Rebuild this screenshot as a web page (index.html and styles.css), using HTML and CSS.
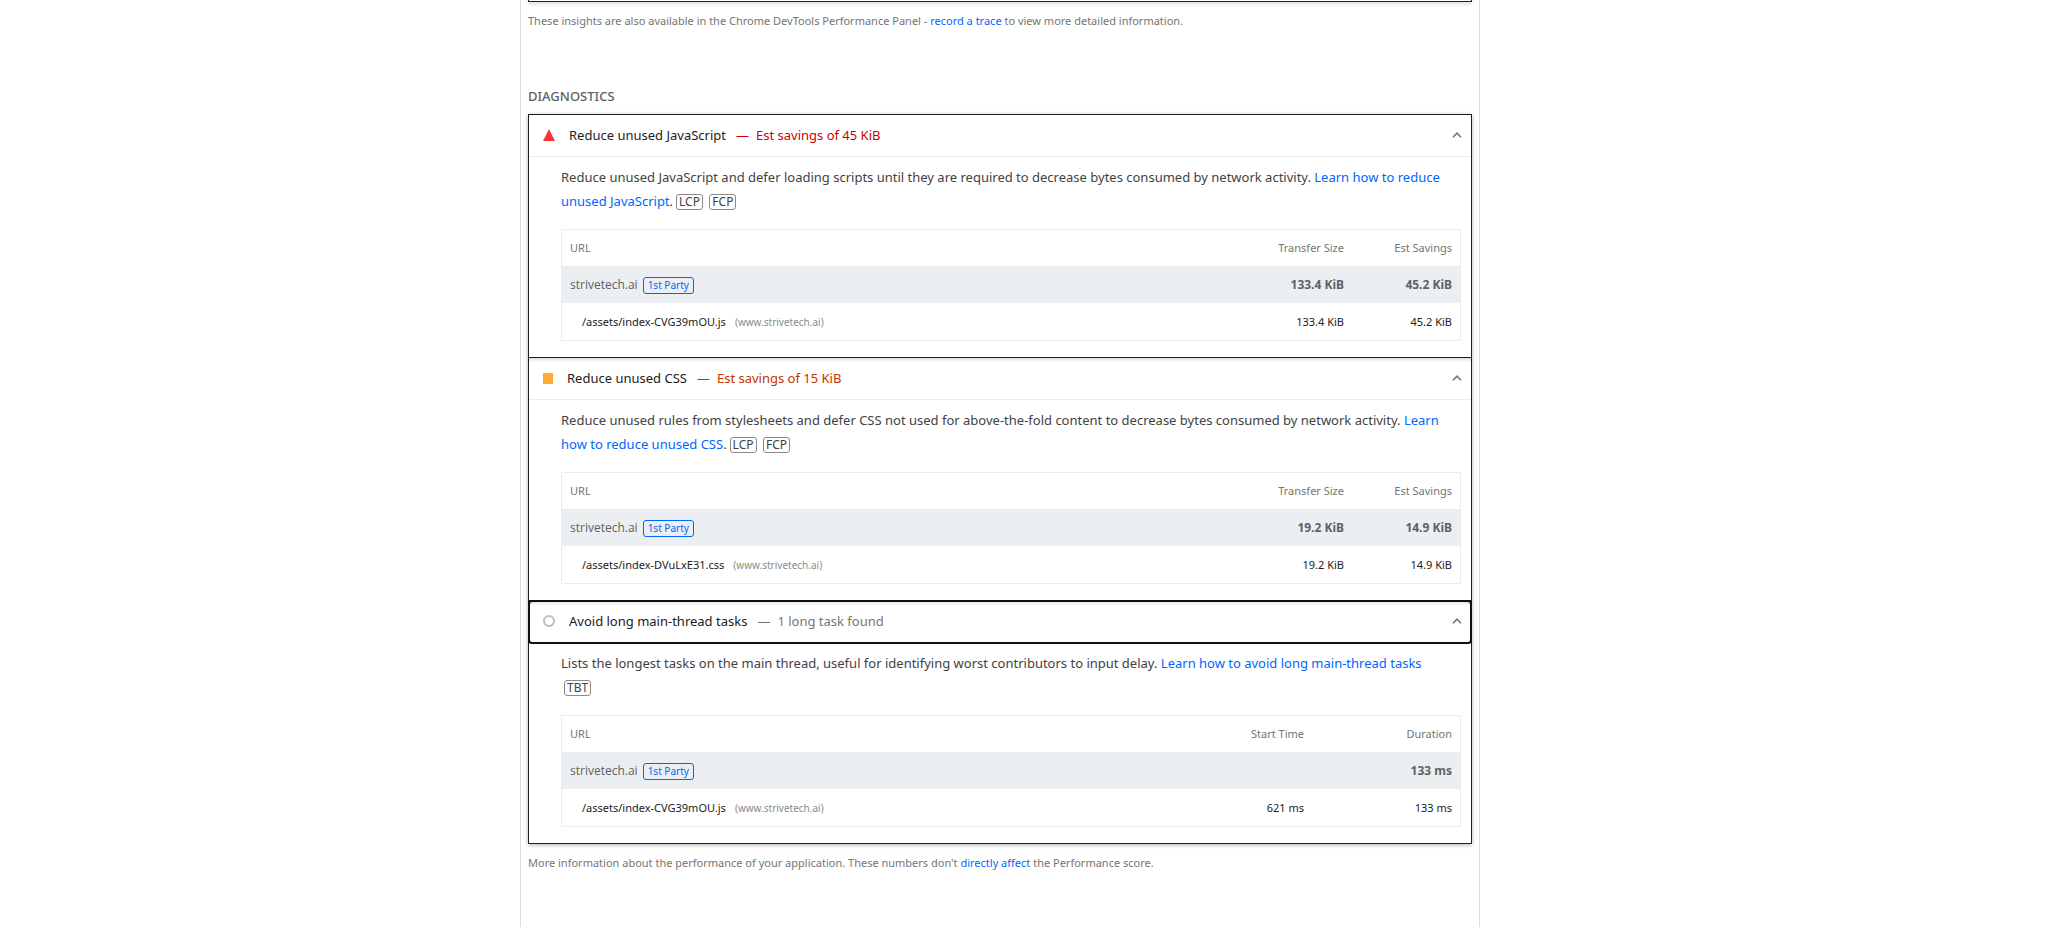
FILE: index.html
```html
<!DOCTYPE html>
<html lang="en">
<head>
<meta charset="utf-8">
<title>Performance diagnostics</title>
<link rel="stylesheet" href="styles.css">
</head>
<body>
<main class="report">
  <section class="group">
    <div class="insights-end"></div>
    <p class="footnote">These insights are also available in the Chrome DevTools Performance Panel - <a href="#trace">record a trace</a> to view more detailed information.</p>
  </section>

  <section class="group diagnostics">
    <h2 class="group-title">Diagnostics</h2>
    <div class="audits">
      <details class="audit" open>
        <summary class="audit-header">
          <svg class="icon" viewBox="0 0 12 12"><path d="M6 0 12 12H0z" fill="#f33"/></svg>
          <span class="audit-title">Reduce unused JavaScript</span>
          <span class="audit-value fail"><span>—</span><span>Est savings of 45 KiB</span></span>
          <svg class="chevron" viewBox="0 0 10 6"><path d="M1 5.2 5 1.2l4 4" fill="none" stroke="#757575" stroke-width="1.6"/></svg>
        </summary>
        <div class="audit-body">
          <p class="description">Reduce unused JavaScript and defer loading scripts until they are required to decrease bytes consumed by network activity. <a href="#unused-js">Learn how to reduce unused JavaScript</a>.<span class="metric">LCP</span> <span class="metric">FCP</span></p>
          <table class="data">
            <thead><tr><th>URL</th><th class="num">Transfer Size</th><th class="num last">Est Savings</th></tr></thead>
            <tbody>
              <tr class="entity"><td>strivetech.ai<span class="party">1st Party</span></td><td class="num">133.4 KiB</td><td class="num">45.2 KiB</td></tr>
              <tr><td class="file"><a class="path" href="#js">/assets/index-CVG39mOU.js</a><span class="host">(www.strivetech.ai)</span></td><td class="num">133.4 KiB</td><td class="num">45.2 KiB</td></tr>
            </tbody>
          </table>
        </div>
      </details>

      <details class="audit" open>
        <summary class="audit-header">
          <svg class="icon square" viewBox="0 0 10 11"><path d="M0 0h10v11H0z" fill="#fa3"/></svg>
          <span class="audit-title">Reduce unused CSS</span>
          <span class="audit-value average"><span>—</span><span>Est savings of 15 KiB</span></span>
          <svg class="chevron" viewBox="0 0 10 6"><path d="M1 5.2 5 1.2l4 4" fill="none" stroke="#757575" stroke-width="1.6"/></svg>
        </summary>
        <div class="audit-body">
          <p class="description">Reduce unused rules from stylesheets and defer CSS not used for above-the-fold content to decrease bytes consumed by network activity. <a href="#unused-css">Learn how to reduce unused CSS</a>.<span class="metric">LCP</span> <span class="metric">FCP</span></p>
          <table class="data">
            <thead><tr><th>URL</th><th class="num">Transfer Size</th><th class="num last">Est Savings</th></tr></thead>
            <tbody>
              <tr class="entity"><td>strivetech.ai<span class="party">1st Party</span></td><td class="num">19.2 KiB</td><td class="num">14.9 KiB</td></tr>
              <tr><td class="file"><a class="path" href="#css">/assets/index-DVuLxE31.css</a><span class="host">(www.strivetech.ai)</span></td><td class="num">19.2 KiB</td><td class="num">14.9 KiB</td></tr>
            </tbody>
          </table>
        </div>
      </details>

      <details class="audit" open>
        <summary class="audit-header focused">
          <svg class="icon" viewBox="0 0 12 12"><circle cx="6" cy="6" r="5" fill="none" stroke="#bdbdbd" stroke-width="2"/></svg>
          <span class="audit-title">Avoid long main-thread tasks</span>
          <span class="audit-value"><span>—</span><span>1 long task found</span></span>
          <svg class="chevron" viewBox="0 0 10 6"><path d="M1 5.2 5 1.2l4 4" fill="none" stroke="#757575" stroke-width="1.6"/></svg>
        </summary>
        <div class="audit-body">
          <p class="description">Lists the longest tasks on the main thread, useful for identifying worst contributors to input delay. <a href="#long-tasks">Learn how to avoid long main-thread tasks</a> <span class="metric">TBT</span></p>
          <table class="data">
            <thead><tr><th>URL</th><th class="num">Start Time</th><th class="num last wide">Duration</th></tr></thead>
            <tbody>
              <tr class="entity"><td>strivetech.ai<span class="party">1st Party</span></td><td class="num"></td><td class="num">133 ms</td></tr>
              <tr><td class="file"><a class="path" href="#task">/assets/index-CVG39mOU.js</a><span class="host">(www.strivetech.ai)</span></td><td class="num">621 ms</td><td class="num">133 ms</td></tr>
            </tbody>
          </table>
        </div>
      </details>
    </div>
    <p class="footnote">More information about the performance of your application. These numbers don't <a href="#score">directly affect</a> the Performance score.</p>
  </section>
</main>
</body>
</html>
```
FILE: styles.css
```css
* { box-sizing: border-box; }

body {
  margin: 0;
  padding-right: 67px;
  background: #fff;
  color: #212121;
  font: 13px/24px "Noto Sans", "Open Sans", sans-serif;
}

p, h2 { margin: 0; }

a { color: #06f; text-decoration: none; }

.report {
  max-width: 960px;
  min-height: 100vh;
  margin: 0 auto;
  padding: 0 7px;
  border: solid #dadce0;
  border-width: 0 1px;
}

.insights-end {
  height: 2px;
  border: 1px solid #212121;
  border-top: 0;
  box-shadow: 0 1px 4px rgba(0, 0, 0, .3);
}

.footnote {
  padding-top: 7px;
  color: #757575;
  font-size: 11px;
}

.diagnostics { padding-top: 51px; }

.group-title {
  padding-bottom: 6px;
  color: #616161;
  font-size: 13px;
  font-weight: 500;
  text-transform: uppercase;
}

.audits {
  border: 1px solid #212121;
  border-top: 0;
  box-shadow: 0 1px 4px rgba(0, 0, 0, .3);
}

.audit {
  border-top: 1px solid #212121;
}

.audit + .audit > .audit-header {
  box-shadow: inset 0 4px 4px -3px rgba(0, 0, 0, .2);
}

.audit-header {
  display: flex;
  align-items: center;
  height: 42px;
  padding: 0 9px 1px 14px;
  border-bottom: 1px solid #ebebeb;
  list-style: none;
  cursor: pointer;
}

.audit-header.focused {
  border-color: transparent;
  border-radius: 3px;
  outline: 2px solid #101010;
  outline-offset: -1px;
}

.icon { flex: none; width: 12px; height: 12px; margin-right: 14px; }
.icon.square { width: 10px; height: 11px; }

.audit-title { margin-right: 10px; }

.audit-value { display: flex; gap: 7px; color: #757575; }
.audit-value.fail { color: #c00; }
.audit-value.average { color: #c33300; }

.chevron { flex: none; width: 10px; height: 6px; margin-left: auto; }

.audit-body { padding: 8px 10px 16px 32px; }

.description { padding-right: 10px; color: #424242; }

.metric {
  display: inline-block;
  margin-left: 3px;
  padding: 0 2px;
  border: 1px solid #8a8a8a;
  border-radius: 3px;
  font-size: 12px;
  line-height: 14px;
}

.data {
  width: 100%;
  margin-top: 16px;
  border: 1px solid #ebebeb;
  border-collapse: separate;
  border-spacing: 0;
  font-size: 11px;
  line-height: 20px;
}

.data th, .data td { height: 36px; padding: 0 8px; text-align: left; }

.data th {
  height: 37px;
  border-bottom: 1px solid #e8ebed;
  color: #757575;
  font-weight: 400;
}

.data .num { text-align: right; white-space: nowrap; }
.data .last { width: 108px; }
.data .wide { width: 148px; }

.entity td { background: #eceff1; color: #616161; font: 12px/20px "Open Sans", sans-serif; }
.data .entity .num { font: 700 12px/20px "Noto Sans", sans-serif; }

.party {
  display: inline-block;
  margin-left: 5px;
  padding: 0 4px;
  border: 1px solid #06f;
  border-radius: 3px;
  color: #06f;
  font: 10px/15px "Noto Sans", sans-serif;
}

.data .file { height: 37px; padding-left: 20px; }
.path { color: #212121; }
.host { margin-left: 9px; color: #8a8a8a; font-size: 10px; }
```
